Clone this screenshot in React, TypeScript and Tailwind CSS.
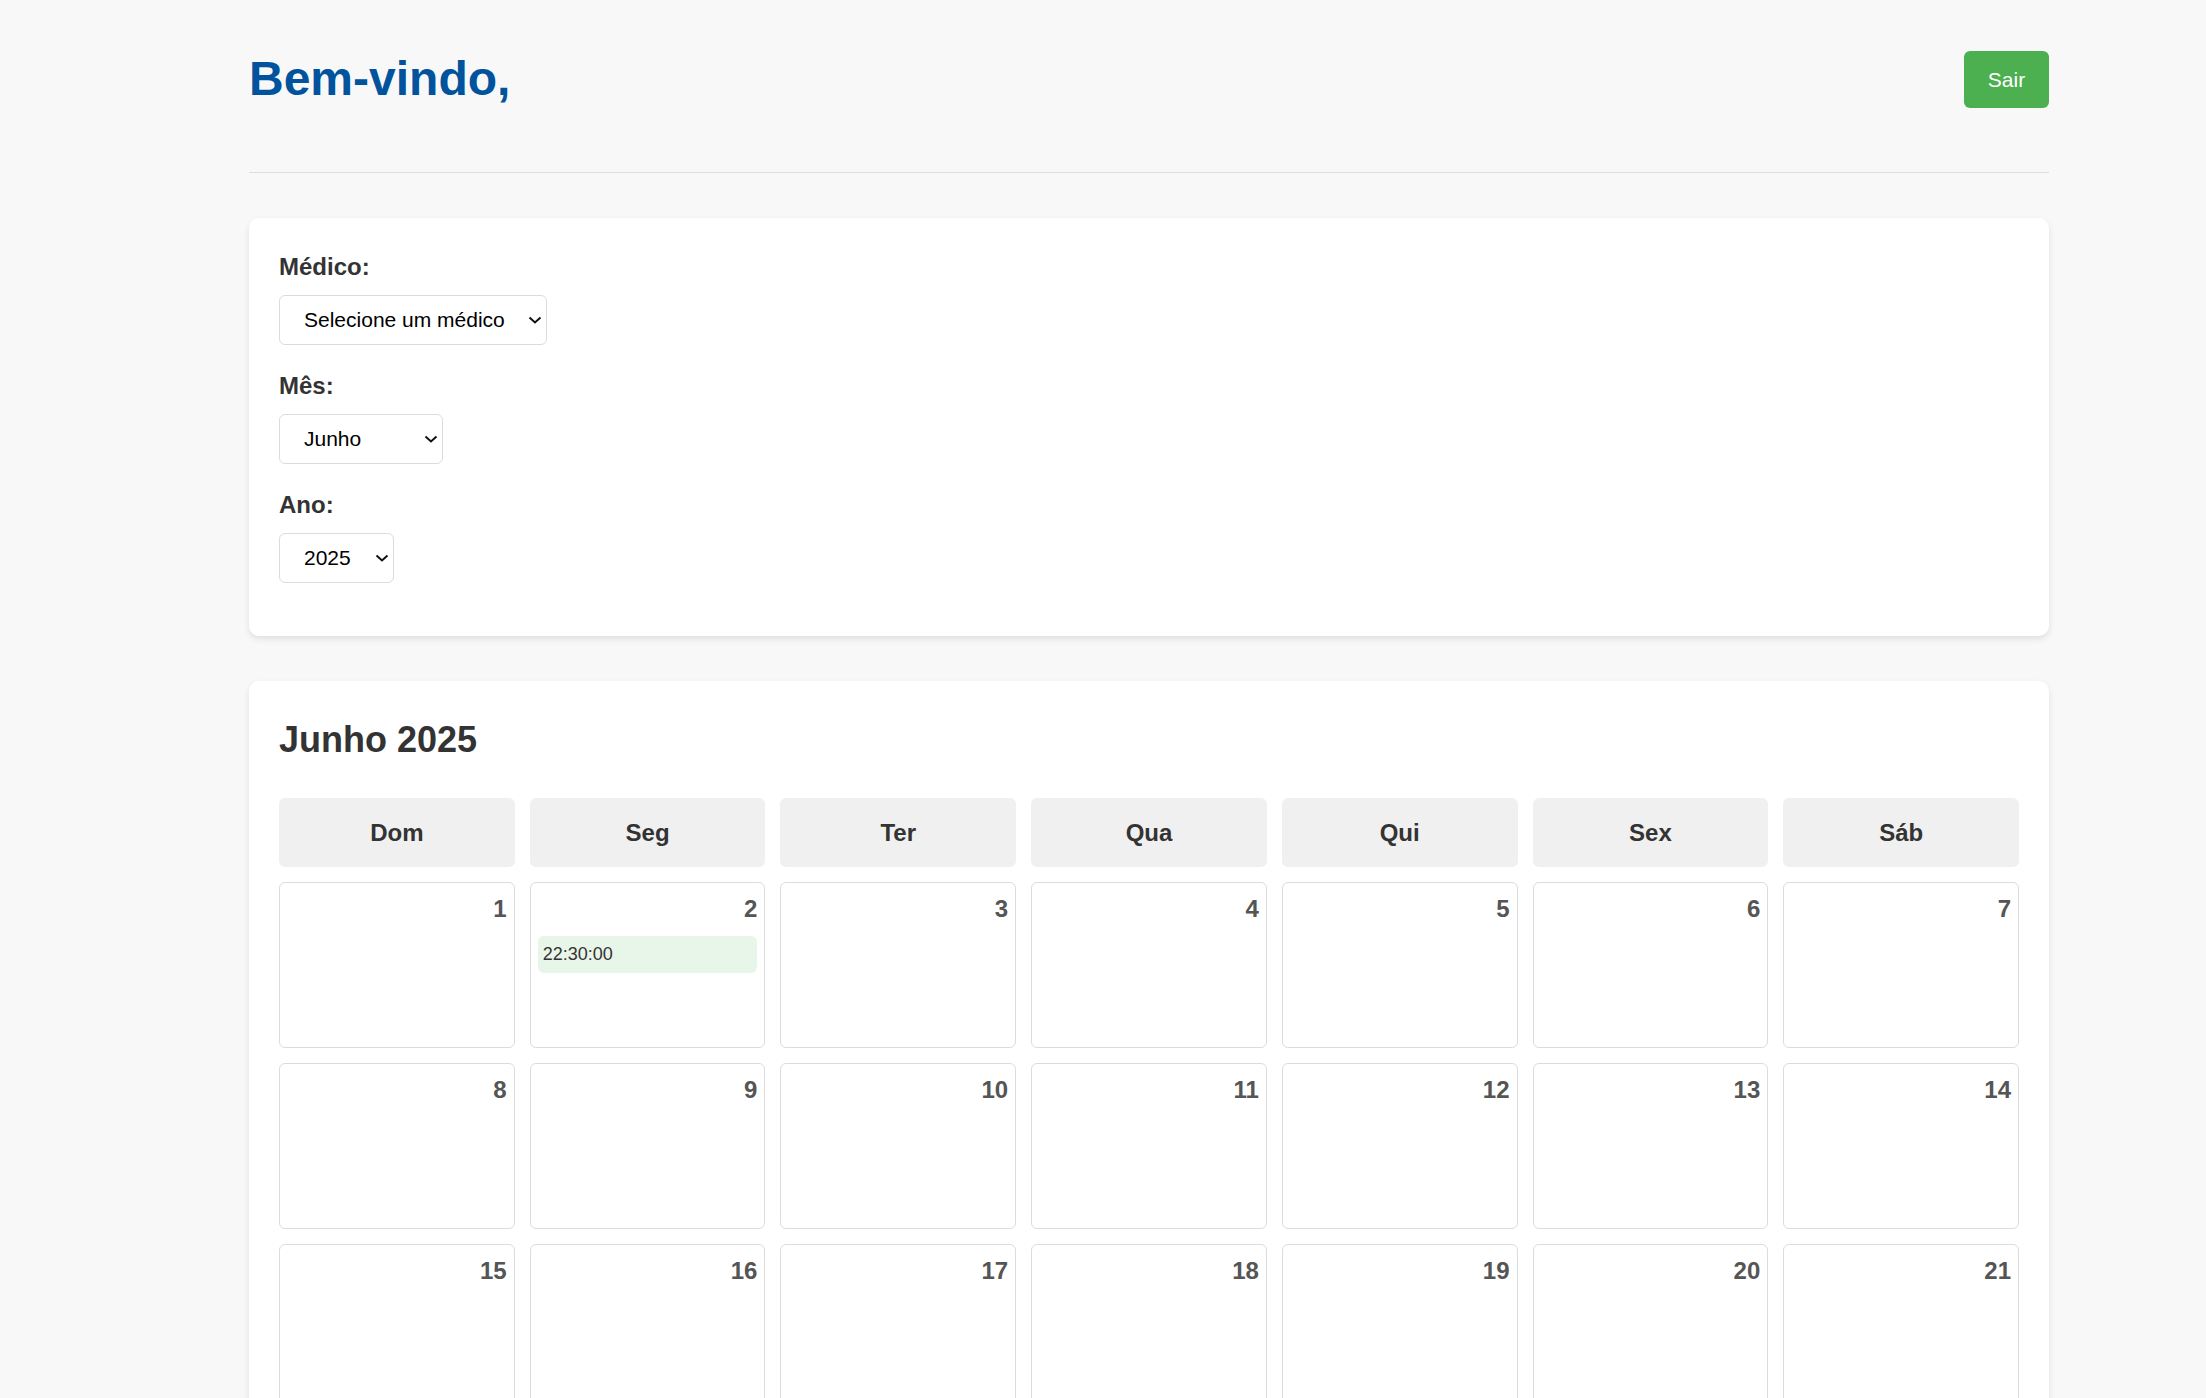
import { useState } from "react";

const WEEKDAYS = ["Dom", "Seg", "Ter", "Qua", "Qui", "Sex", "Sáb"];

const MONTHS = [
  "Janeiro",
  "Fevereiro",
  "Março",
  "Abril",
  "Maio",
  "Junho",
  "Julho",
  "Agosto",
  "Setembro",
  "Outubro",
  "Novembro",
  "Dezembro",
];

// horarios marcados por dia do mes
const appointments: Record<number, string[]> = {
  2: ["22:30:00"],
};

type SelectProps = {
  value: string;
  options: string[];
  width: string;
  onChange: (v: string) => void;
};

function Chevron() {
  return (
    <svg
      width="14"
      height="8"
      viewBox="0 0 14 8"
      className="pointer-events-none absolute right-[5px] top-1/2 -translate-y-1/2"
    >
      <path d="M1.5 1.5 L7 6.5 L12.5 1.5" fill="none" stroke="#111" strokeWidth="2" />
    </svg>
  );
}

function FilterSelect({ value, options, width, onChange }: SelectProps) {
  return (
    <div className={`relative ${width}`}>
      <select
        value={value}
        onChange={(e) => onChange(e.target.value)}
        className="appearance-none block w-full h-[50px] bg-white border border-[#dcdcdc] rounded-[6px] pl-[24px] pr-[24px] text-[21px] text-black outline-none"
      >
        {options.map((o) => (
          <option key={o} value={o}>
            {o}
          </option>
        ))}
      </select>
      <Chevron />
    </div>
  );
}

function FilterGroup({ label, children }: { label: string; children: React.ReactNode }) {
  return (
    <div className="mb-[23px]">
      <label className="block text-[24px] leading-[36px] font-bold text-[#333] mb-[10px]">
        {label}
      </label>
      {children}
    </div>
  );
}

export default function App() {
  const [medico, setMedico] = useState("Selecione um médico");
  const [mes, setMes] = useState("Junho");
  const [ano, setAno] = useState("2025");

  const monthIndex = MONTHS.indexOf(mes);
  const year = parseInt(ano, 10);
  const firstDay = new Date(year, monthIndex, 1).getDay();
  const daysInMonth = new Date(year, monthIndex + 1, 0).getDate();

  const cells: (number | null)[] = [];
  for (let i = 0; i < firstDay; i++) cells.push(null);
  for (let d = 1; d <= daysInMonth; d++) cells.push(d);

  return (
    <div
      className="min-h-screen bg-[#f8f8f8] text-[#333]"
      style={{ fontFamily: '"Liberation Sans", Arial, sans-serif' }}
    >
      <div className="ml-[249px] w-[1800px] pb-[60px]">
        <header className="flex items-start justify-between pt-[51px] pb-[64px] border-b border-[#dedede]">
          <h1 className="text-[48px] leading-[55px] font-bold text-[#00539c]">Bem-vindo,</h1>
          <button className="h-[57px] w-[85px] rounded-[6px] bg-[#4caf50] text-white text-[21px]">
            Sair
          </button>
        </header>

        <section className="mt-[45px] bg-white rounded-[10px] shadow-[0_3px_6px_rgba(0,0,0,0.1)] px-[30px] pt-[31px] pb-[30px]">
          <FilterGroup label="Médico:">
            <FilterSelect
              value={medico}
              options={["Selecione um médico"]}
              width="w-[268px]"
              onChange={setMedico}
            />
          </FilterGroup>
          <FilterGroup label="Mês:">
            <FilterSelect value={mes} options={MONTHS} width="w-[164px]" onChange={setMes} />
          </FilterGroup>
          <FilterGroup label="Ano:">
            <FilterSelect
              value={ano}
              options={["2024", "2025", "2026"]}
              width="w-[115px]"
              onChange={setAno}
            />
          </FilterGroup>
        </section>

        <section className="mt-[45px] bg-white rounded-[10px] shadow-[0_3px_6px_rgba(0,0,0,0.1)] px-[30px] pt-[38px] pb-[30px]">
          <h2 className="text-[36px] leading-[42px] font-bold text-[#333] mb-[37px]">
            {mes} {ano}
          </h2>
          <div className="grid grid-cols-7 gap-[15px]">
            {WEEKDAYS.map((w) => (
              <div
                key={w}
                className="h-[69px] flex items-center justify-center rounded-[6px] bg-[#f0f0f0] text-[24px] font-bold text-[#333]"
              >
                {w}
              </div>
            ))}
            {cells.map((d, i) =>
              d === null ? (
                <div key={"e" + i} />
              ) : (
                <div
                  key={d}
                  className="h-[166px] rounded-[6px] border border-[#dcdcdc] bg-white px-[7px] pt-[12px]"
                >
                  <div className="text-right text-[24px] leading-[28px] font-bold text-[#555]">
                    {d}
                  </div>
                  {(appointments[d] || []).map((h) => (
                    <div
                      key={h}
                      className="mt-[13px] h-[37px] flex items-center rounded-[6px] bg-[#e8f5e9] px-[5px] text-[18px] text-[#333]"
                    >
                      {h}
                    </div>
                  ))}
                </div>
              ),
            )}
          </div>
        </section>
      </div>
    </div>
  );
}
